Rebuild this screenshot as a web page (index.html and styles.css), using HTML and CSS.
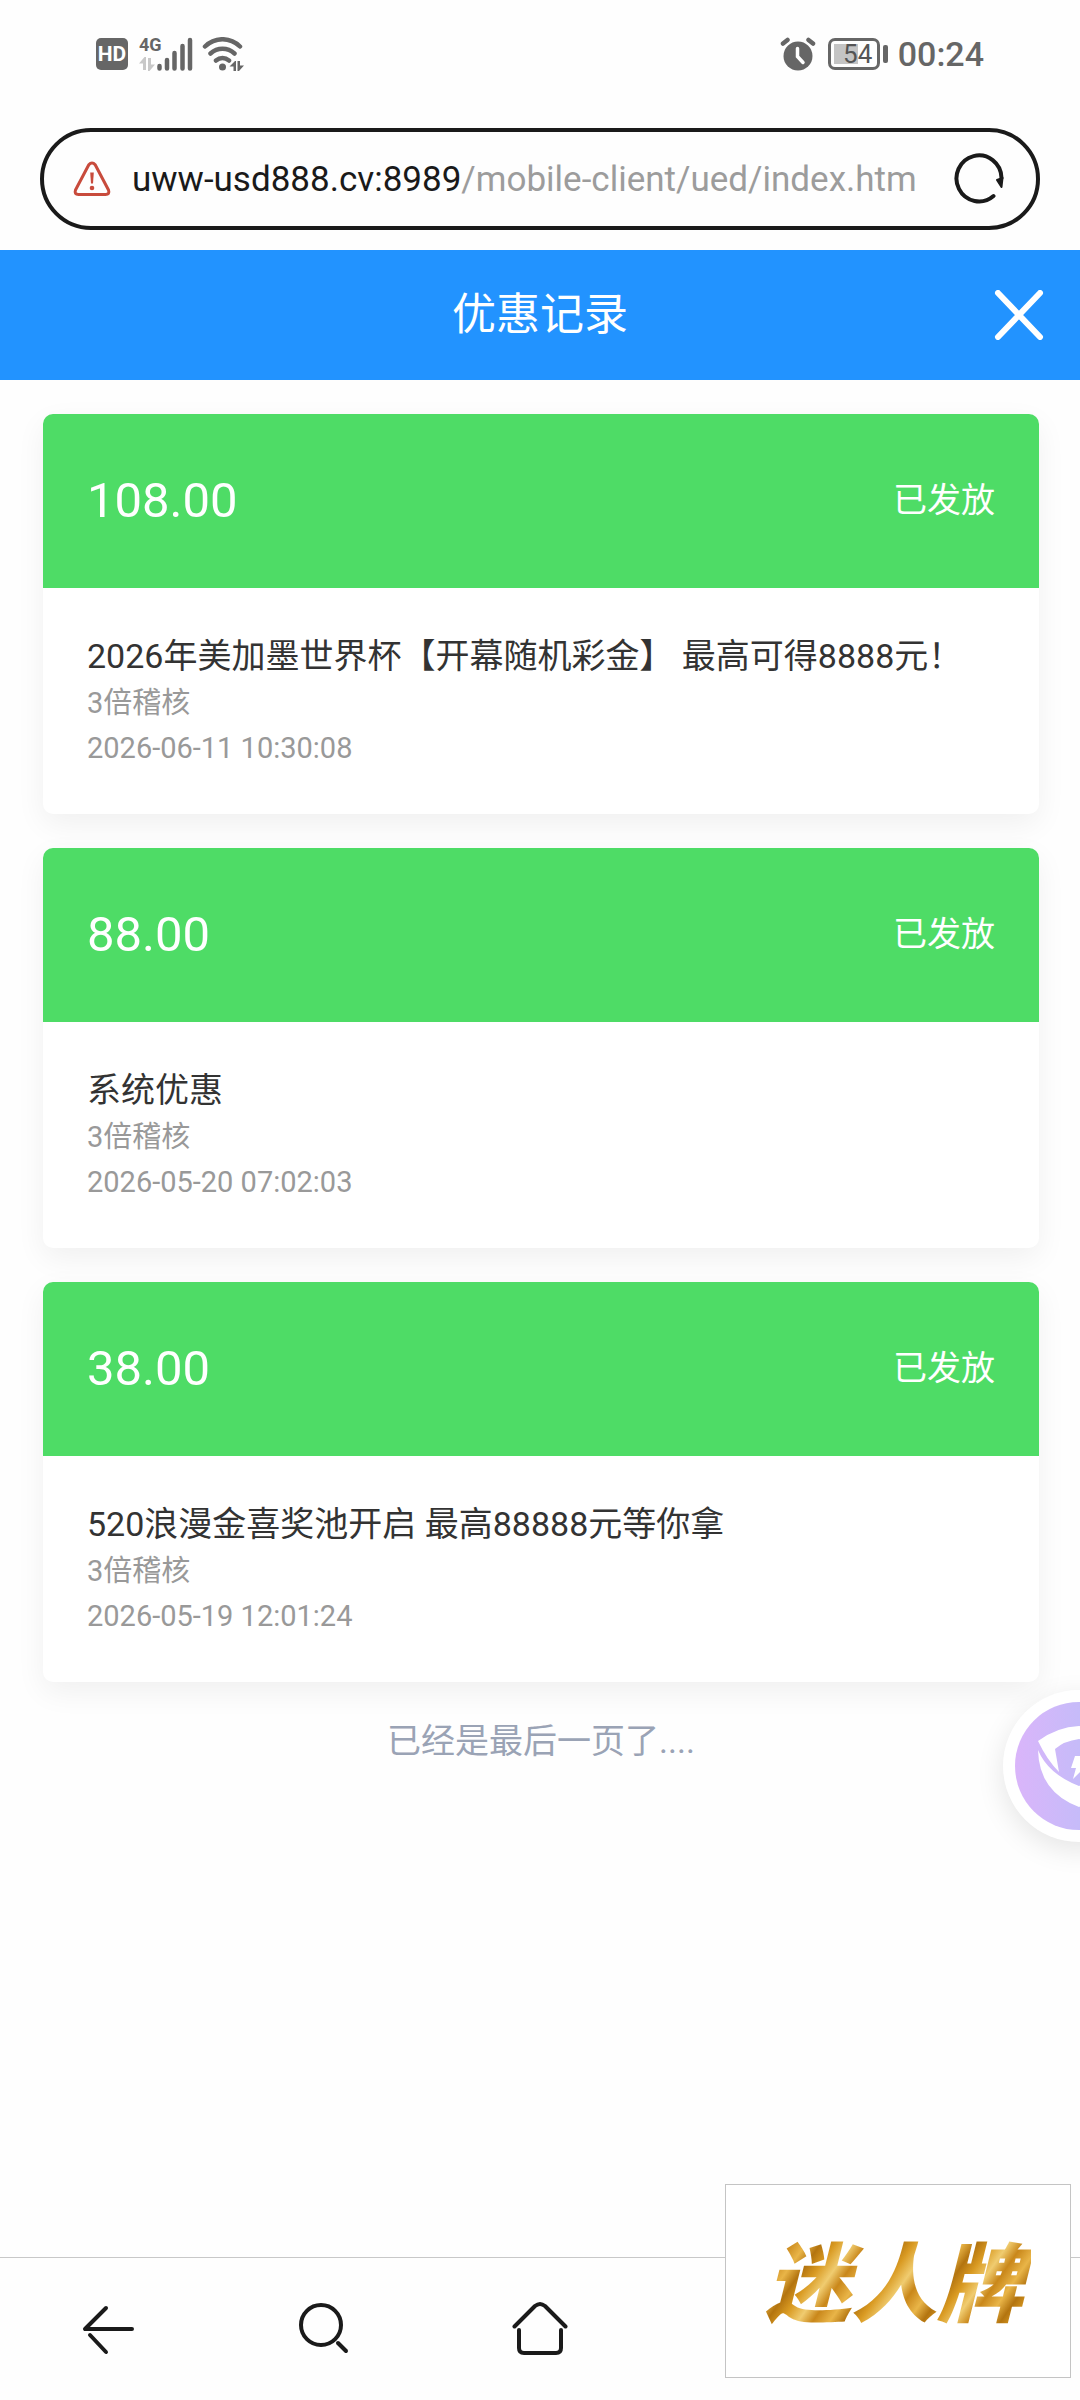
FILE: index.html
```html
<!DOCTYPE html>
<html lang="zh-CN">
<head>
    <meta charset="UTF-8">
    <meta name="viewport" content="width=device-width, initial-scale=1.0">
    <title>优惠记录</title>
    <link rel="stylesheet" href="styles.css">
</head>
<body>

    <div class="status-bar">
        <div class="status-left">
            <span class="hd">HD</span>
            <div class="network">
                <span class="network-type">4G</span>
                <svg width="16" height="14" viewBox="0 0 16 14" fill="#c8c8c8"><path d="M0 6.500L5.500 0H7v13H4V6.500zM16 7.500L10.500 14H9V1h3v6.500z"/></svg>
            </div>
            <svg class="signal" width="36" height="34" viewBox="0 0 36 34" stroke="#666" stroke-width="4.500" stroke-linecap="round">
                <path d="M2.500 29v2.500M10 23v8.500M17.500 16v15.500M25.500 9v22.500M33 3v28.500"/>
            </svg>
            <svg class="wifi" width="42" height="34" viewBox="0 0 42 34" fill="none" stroke="#666" stroke-width="4.500" stroke-linecap="round">
                <path d="M3 9.500C13-.200 28-.200 38 9.500M8.500 16.500c7-6.200 17-6.200 24 0M14 23.500c4-3.200 9-3.200 13 0"/>
                <circle cx="20.500" cy="30" r="3.500" fill="#666" stroke="none"/>
                <path d="M27.500 29.500L33 24h1v10h-2.500v-4.500zM42 28.500L37 34h-1.500V24H38v4.500z" fill="#666" stroke="none"/>
            </svg>
        </div>
        <div class="status-right">
            <svg width="36" height="34" viewBox="0 0 36 34" fill="none" stroke-linecap="round">
                <circle cx="18" cy="19" r="14.500" fill="#666"/>
                <path d="M3 6.500L7.500 3M33 6.500L28.500 3" stroke="#666" stroke-width="4.500"/>
                <path d="M17.500 11.500v8l5.500 6" stroke="#fff" stroke-width="3.500"/>
            </svg>
            <div class="battery"><span>54</span></div>
            <span class="clock">00:24</span>
        </div>
    </div>

    <div class="address">
        <svg width="38" height="36" viewBox="0 0 38 36" fill="none" stroke="#c84b3c" stroke-width="3" stroke-linejoin="round">
            <path d="M15.800 3.800Q19 0 22.200 3.800L35.500 29Q37 33.500 32.500 33.500H5.500Q1 33.500 2.500 29z"/>
            <path d="M17.200 11.500h3.600L20 22.500h-2z" fill="#c84b3c" stroke="none"/>
            <circle cx="19" cy="27" r="2.300" fill="#c84b3c" stroke="none"/>
        </svg>
        <a class="url" href="#">uww-usd888.cv:8989<span>/mobile-client/ued/index.htm</span></a>
        <button class="icon-button" aria-label="刷新">
            <svg width="50" height="52" viewBox="0 0 50 52" fill="none" stroke="#1a1a1a" stroke-width="4" stroke-linecap="round">
                <path d="M39.500 43A22.500 23 0 1 1 47.500 25"/>
                <path d="M43 27l4.500 7 1-9z" fill="#1a1a1a" stroke-width="2" stroke-linejoin="round"/>
            </svg>
        </button>
    </div>

    <header class="page-header">
        <h1>优惠记录</h1>
        <button class="icon-button" aria-label="关闭">
            <svg width="50" height="50" viewBox="0 0 50 50" stroke="#fff" stroke-width="6" stroke-linecap="round">
                <path d="M4 3l42 44M46 3L4 47"/>
            </svg>
        </button>
    </header>

    <main class="records">
        <article class="record">
            <div class="record-top">
                <span class="amount">108.00</span>
                <span class="state">已发放</span>
            </div>
            <div class="record-body">
                <h2>2026年美加墨世界杯【开幕随机彩金】 最高可得8888元！</h2>
                <p>3倍稽核</p>
                <p>2026-06-11 10:30:08</p>
            </div>
        </article>
        <article class="record">
            <div class="record-top">
                <span class="amount">88.00</span>
                <span class="state">已发放</span>
            </div>
            <div class="record-body">
                <h2>系统优惠</h2>
                <p>3倍稽核</p>
                <p>2026-05-20 07:02:03</p>
            </div>
        </article>
        <article class="record">
            <div class="record-top">
                <span class="amount">38.00</span>
                <span class="state">已发放</span>
            </div>
            <div class="record-body">
                <h2>520浪漫金喜奖池开启 最高88888元等你拿</h2>
                <p>3倍稽核</p>
                <p>2026-05-19 12:01:24</p>
            </div>
        </article>
        <p class="no-more">已经是最后一页了....</p>
    </main>

    <nav class="toolbar">
        <button class="icon-button" aria-label="返回">
            <svg width="56" height="56" viewBox="0 0 56 56">
                <path d="M26 7L5 28h47M10 34l16 17"/>
            </svg>
        </button>
        <button class="icon-button" aria-label="搜索">
            <svg width="56" height="56" viewBox="0 0 56 56">
                <ellipse cx="25" cy="24" rx="20" ry="20"/>
                <path d="M42 42l8 8"/>
            </svg>
        </button>
        <button class="icon-button" aria-label="主页">
            <svg width="56" height="56" viewBox="0 0 56 56">
                <path d="M2.500 25.500L23 5q5-4 10 0l20.500 20.500M7 29v18q0 5 5 5h32q5 0 5-5V29"/>
            </svg>
        </button>
    </nav>

    <button class="shield" aria-label="安全防护">
        <svg width="128" height="128" viewBox="0 0 128 128">
            <defs>
                <linearGradient id="shieldFill">
                    <stop offset="0" stop-color="#dab5fa"/>
                    <stop offset=".5" stop-color="#c6bbf9"/>
                    <stop offset="1" stop-color="#b5c0f8"/>
                </linearGradient>
            </defs>
            <circle cx="64" cy="64" r="64" fill="url(#shieldFill)"/>
            <path d="M23 39Q42 25 64 24q22 1 41 15L85 70l-2-9 4-14q-9-8-23-10-15 2-24 10l4 23Q32 58 23 39z" fill="#fff"/>
            <path d="M23 48q10 24 41 36 31-12 41-36-1 42-41 57Q24 90 23 48z" fill="#fff"/>
            <path d="M60 54h10l-4 9h6L58 77l3-11h-5z" fill="#fff"/>
        </svg>
    </button>

    <div class="brand"><span>迷人牌</span></div>

</body>
</html>
```
FILE: styles.css
```css
* {
    margin: 0;
    padding: 0;
    box-sizing: border-box;
}

body {
    display: flex;
    flex-direction: column;
    min-height: 100vh;
    font-family: Roboto, "Noto Sans CJK SC", sans-serif;
    background-color: #fefefe;
    color: #333;
}

svg {
    display: block;
    flex: none;
}

.icon-button {
    display: flex;
    align-items: center;
    justify-content: center;
    background: none;
    border: none;
    cursor: pointer;
}

/* phone status bar */
.status-bar {
    display: flex;
    justify-content: space-between;
    align-items: center;
    height: 108px;
    padding: 0 96px;
    color: #666;
}

.status-left,
.status-right {
    display: flex;
    align-items: center;
}

.hd {
    width: 32px;
    height: 32px;
    border-radius: 5px;
    background-color: #666;
    color: #fff;
    font-size: 21px;
    font-weight: bold;
    line-height: 32px;
    text-align: center;
}

.network {
    width: 18px;
    height: 34px;
    margin-left: 11px;
    display: flex;
    flex-direction: column;
    justify-content: space-between;
}

.network-type {
    font-size: 18px;
    font-weight: bold;
    line-height: 16px;
}

.wifi {
    margin-left: 9px;
}

.status-right {
    gap: 12px;
}

.battery {
    position: relative;
    width: 52px;
    height: 32px;
    border: 3px solid #666;
    border-radius: 7px;
    background: linear-gradient(#c4c4c4, #c4c4c4) 3px 3px / 24px 20px no-repeat;
    font-size: 26px;
    line-height: 26px;
    text-align: center;
    color: #555;
}

.battery::after {
    content: "";
    position: absolute;
    top: 4px;
    right: -11px;
    width: 5px;
    height: 18px;
    border-radius: 2px;
    background-color: #666;
}

.battery span {
    padding-left: 8px;
}

.clock {
    font-size: 34px;
    font-weight: 500;
    margin-left: 6px;
}

/* address bar */
.address {
    display: flex;
    align-items: center;
    height: 102px;
    margin: 20px 40px;
    padding: 0 32px 0 29px;
    border: 4px solid #1a1a1a;
    border-radius: 51px;
}

.url {
    flex: 1;
    margin-left: 21px;
    overflow: hidden;
    white-space: nowrap;
    font-size: 35px;
    color: #1a1a1a;
    text-decoration: none;
}

.url span {
    color: #9c9c9c;
}

/* title */
.page-header {
    display: grid;
    grid-template-columns: 1fr auto 1fr;
    align-items: center;
    height: 130px;
    padding: 0 36px;
    background-color: #2293ff;
    color: #fff;
}

.page-header h1 {
    grid-column: 2;
    font-size: 44px;
    font-weight: normal;
    line-height: 60px;
}

.page-header .icon-button {
    justify-self: end;
}

/* records */
.records {
    flex: 1;
    display: flex;
    flex-direction: column;
    gap: 34px;
    padding: 34px 41px 0 43px;
}

.record {
    border-radius: 10px;
    background-color: #fff;
    box-shadow: 0 10px 30px rgba(0, 0, 0, 0.06);
    overflow: hidden;
    flex: none;
}

.record-top {
    display: flex;
    justify-content: space-between;
    align-items: center;
    height: 174px;
    padding: 0 44px 2px;
    background-color: #4edc66;
    color: #fff;
}

.amount {
    font-size: 49px;
}

.state {
    font-size: 34px;
    line-height: 50px;
}

.record-body {
    padding: 43px 44px;
}

.record-body h2 {
    font-size: 34px;
    font-weight: normal;
    line-height: 50px;
}

.record-body p {
    font-size: 29px;
    line-height: 45px;
    color: #999;
}

.no-more {
    font-size: 34px;
    line-height: 50px;
    text-align: center;
    color: #9aa3b5;
}

/* bottom toolbar */
.toolbar {
    display: grid;
    grid-template-columns: repeat(5, 1fr);
    height: 143px;
    border-top: 1px solid #c8c8c8;
}

.toolbar svg {
    fill: none;
    stroke: #1a1a1a;
    stroke-width: 4;
    stroke-linecap: round;
    stroke-linejoin: round;
}

/* floating items over the page */
.shield {
    position: fixed;
    top: 1690px;
    right: -75px;
    width: 152px;
    height: 152px;
    padding: 12px;
    border: none;
    border-radius: 50%;
    background-color: #fff;
    box-shadow: 0 8px 28px rgba(0, 0, 0, 0.1);
    cursor: pointer;
}

.brand {
    position: fixed;
    right: 9px;
    bottom: 22px;
    width: 346px;
    height: 194px;
    display: flex;
    align-items: center;
    justify-content: center;
    padding: 0 8px 6px 0;
    border: 1px solid #c4c4c4;
    background-color: #fff;
}

.brand span {
    padding: 0 8px;
    font-family: "Noto Sans CJK SC", sans-serif;
    font-size: 86px;
    font-weight: 900;
    font-style: italic;
    line-height: 110px;
    color: transparent;
    background: repeating-linear-gradient(125deg, #b3740f 0, #d99a22 12px, #f0cc70 26px, #c9871a 38px, #e9b548 52px, #b3740f 64px);
    -webkit-background-clip: text;
    background-clip: text;
}
```
